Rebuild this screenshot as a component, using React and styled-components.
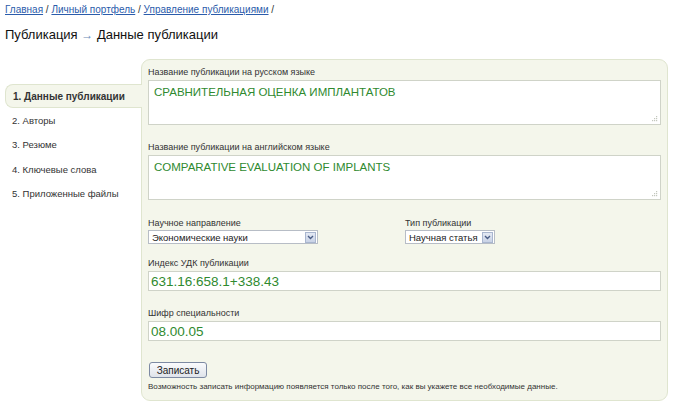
import React from "react";
import styled, { createGlobalStyle } from "styled-components";

const Global = createGlobalStyle`
  html, body { margin: 0; padding: 0; background: #fff; }
  body { font-family: "Liberation Sans", Arial, sans-serif; color: #222; }
`;

const Page = styled.div`
  padding: 4px 5px 0 5px;
  width: 665px;
`;

const Crumbs = styled.div`
  font-size: 10px;
  line-height: 12px;
  color: #333;
  a { color: #2b5cab; text-decoration: underline; }
`;

const Title = styled.h1`
  margin: 10px 0 0 0;
  font-size: 13px;
  line-height: 17px;
  font-weight: normal;
  color: #111;
`;

const Arrow = styled.span`
  color: #6a8ab8;
  font-size: 12px;
`;

const Main = styled.div`
  display: flex;
  align-items: flex-start;
  margin-top: 15px;
`;

const Side = styled.ul`
  list-style: none;
  margin: 25px 0 0 0;
  padding: 0;
  width: 136px;
  flex: none;
  position: relative;
  z-index: 1;
`;

const Tab = styled.li`
  height: ${(p) => (p.$active ? "22px" : "24.5px")};
  display: flex;
  align-items: center;
  padding-left: 7px;
  font-size: ${(p) => (p.$active ? "10px" : "9.5px")};
  color: #333;
  font-weight: ${(p) => (p.$active ? "bold" : "normal")};
  margin-right: ${(p) => (p.$active ? "-1px" : "0")};
  background: ${(p) => (p.$active ? "#f4f6eb" : "transparent")};
  border: ${(p) => (p.$active ? "1px solid #dfe5cf" : "none")};
  border-right: none;
  border-radius: 8px 0 0 8px;
`;

const Panel = styled.div`
  width: 527px;
  background: #f4f6eb;
  border: 1px solid #dfe5cf;
  border-radius: 9px;
  padding: 6px 6px 10px 6px;
  box-sizing: border-box;
  height: 342px;
`;

const Label = styled.div`
  font-size: 9px;
  line-height: 12px;
  color: #333;
  margin-top: ${(p) => p.$top || 0}px;
`;

const Area = styled.div`
  position: relative;
  margin-top: 2px;
  height: 45px;
  background: #fff;
  border: 1px solid #cfd3c8;
  box-sizing: border-box;
  padding: 4px 5px;
  font-size: 11.5px;
  line-height: 15px;
  color: #2f8a2f;
`;

const Grip = styled.svg`
  position: absolute;
  right: 2px;
  bottom: 2px;
`;

const SelectRow = styled.div`
  display: flex;
  margin-top: 17px;
`;

const SelectGroup = styled.div`
  width: ${(p) => p.$w}px;
`;

const Select = styled.div`
  margin-top: 1px;
  display: flex;
  align-items: center;
  justify-content: space-between;
  width: ${(p) => p.$w}px;
  height: 14px;
  background: #fff;
  border: 1px solid #b7bdc6;
  box-sizing: border-box;
  font-size: 9.5px;
  color: #222;
  padding-left: 3px;
  white-space: nowrap;
`;

const DropBtn = styled.span`
  flex: none;
  width: 11px;
  height: 11px;
  margin-right: 1px;
  background: linear-gradient(#e4e9f4, #c9d3e6);
  border: 1px solid #a9b6cf;
  box-sizing: border-box;
  display: flex;
  align-items: center;
  justify-content: center;
`;

const Input = styled.div`
  margin-top: 2px;
  height: 20px;
  background: #fff;
  border: 1px solid #cfd3c8;
  box-sizing: border-box;
  padding: 0 0 0 2px;
  display: flex;
  align-items: center;
  font-size: 13.5px;
  color: #2f8a2f;
`;

const Button = styled.button`
  margin-top: 21px;
  margin-left: 1px;
  width: 58px;
  height: 16px;
  padding: 0;
  font-family: inherit;
  font-size: 10px;
  color: #222;
  background: linear-gradient(#fafbfd, #dfe3ea);
  border: 1px solid #7d8aa3;
  border-radius: 3px;
  display: block;
`;

const Note = styled.div`
  margin-top: 3px;
  font-size: 8px;
  line-height: 12px;
  color: #333;
`;

const Chevron = () => (
  <svg width="7" height="5" viewBox="0 0 7 5">
    <path d="M1 1 L3.5 3.5 L6 1" stroke="#4a5d86" strokeWidth="1.4" fill="none" />
  </svg>
);

const ResizeGrip = () => (
  <Grip width="7" height="7" viewBox="0 0 7 7">
    {[
      [5, 1],
      [3, 3],
      [5, 3],
      [1, 5],
      [3, 5],
      [5, 5],
    ].map(([x, y]) => (
      <rect key={`${x}-${y}`} x={x} y={y} width="1.2" height="1.2" fill="#c3c7bd" />
    ))}
  </Grip>
);

export default function App() {
  return (
    <>
      <Global />
      <Page>
        <Crumbs>
          <a href="#">Главная</a> / <a href="#">Личный портфель</a> /{" "}
          <a href="#">Управление публикациями</a> /
        </Crumbs>
        <Title>
          Публикация <Arrow>→</Arrow> Данные публикации
        </Title>
        <Main>
          <Side>
            <Tab $active>1. Данные публикации</Tab>
            <Tab>2. Авторы</Tab>
            <Tab>3. Резюме</Tab>
            <Tab>4. Ключевые слова</Tab>
            <Tab>5. Приложенные файлы</Tab>
          </Side>
          <Panel>
            <Label>Название публикации на русском языке</Label>
            <Area>
              СРАВНИТЕЛЬНАЯ ОЦЕНКА ИМПЛАНТАТОВ
              <ResizeGrip />
            </Area>
            <Label $top={16}>Название публикации на английском языке</Label>
            <Area>
              COMPARATIVE EVALUATION OF IMPLANTS
              <ResizeGrip />
            </Area>
            <SelectRow>
              <SelectGroup $w={257}>
                <Label>Научное направление</Label>
                <Select $w={170}>
                  Экономические науки
                  <DropBtn>
                    <Chevron />
                  </DropBtn>
                </Select>
              </SelectGroup>
              <SelectGroup $w={100}>
                <Label>Тип публикации</Label>
                <Select $w={90}>
                  Научная статья
                  <DropBtn>
                    <Chevron />
                  </DropBtn>
                </Select>
              </SelectGroup>
            </SelectRow>
            <Label $top={13}>Индекс УДК публикации</Label>
            <Input>631.16:658.1+338.43</Input>
            <Label $top={16}>Шифр специальности</Label>
            <Input>08.00.05</Input>
            <Button>Записать</Button>
            <Note>
              Возможность записать информацию появляется только после того, как вы укажете все необходимые данные.
            </Note>
          </Panel>
        </Main>
      </Page>
    </>
  );
}
